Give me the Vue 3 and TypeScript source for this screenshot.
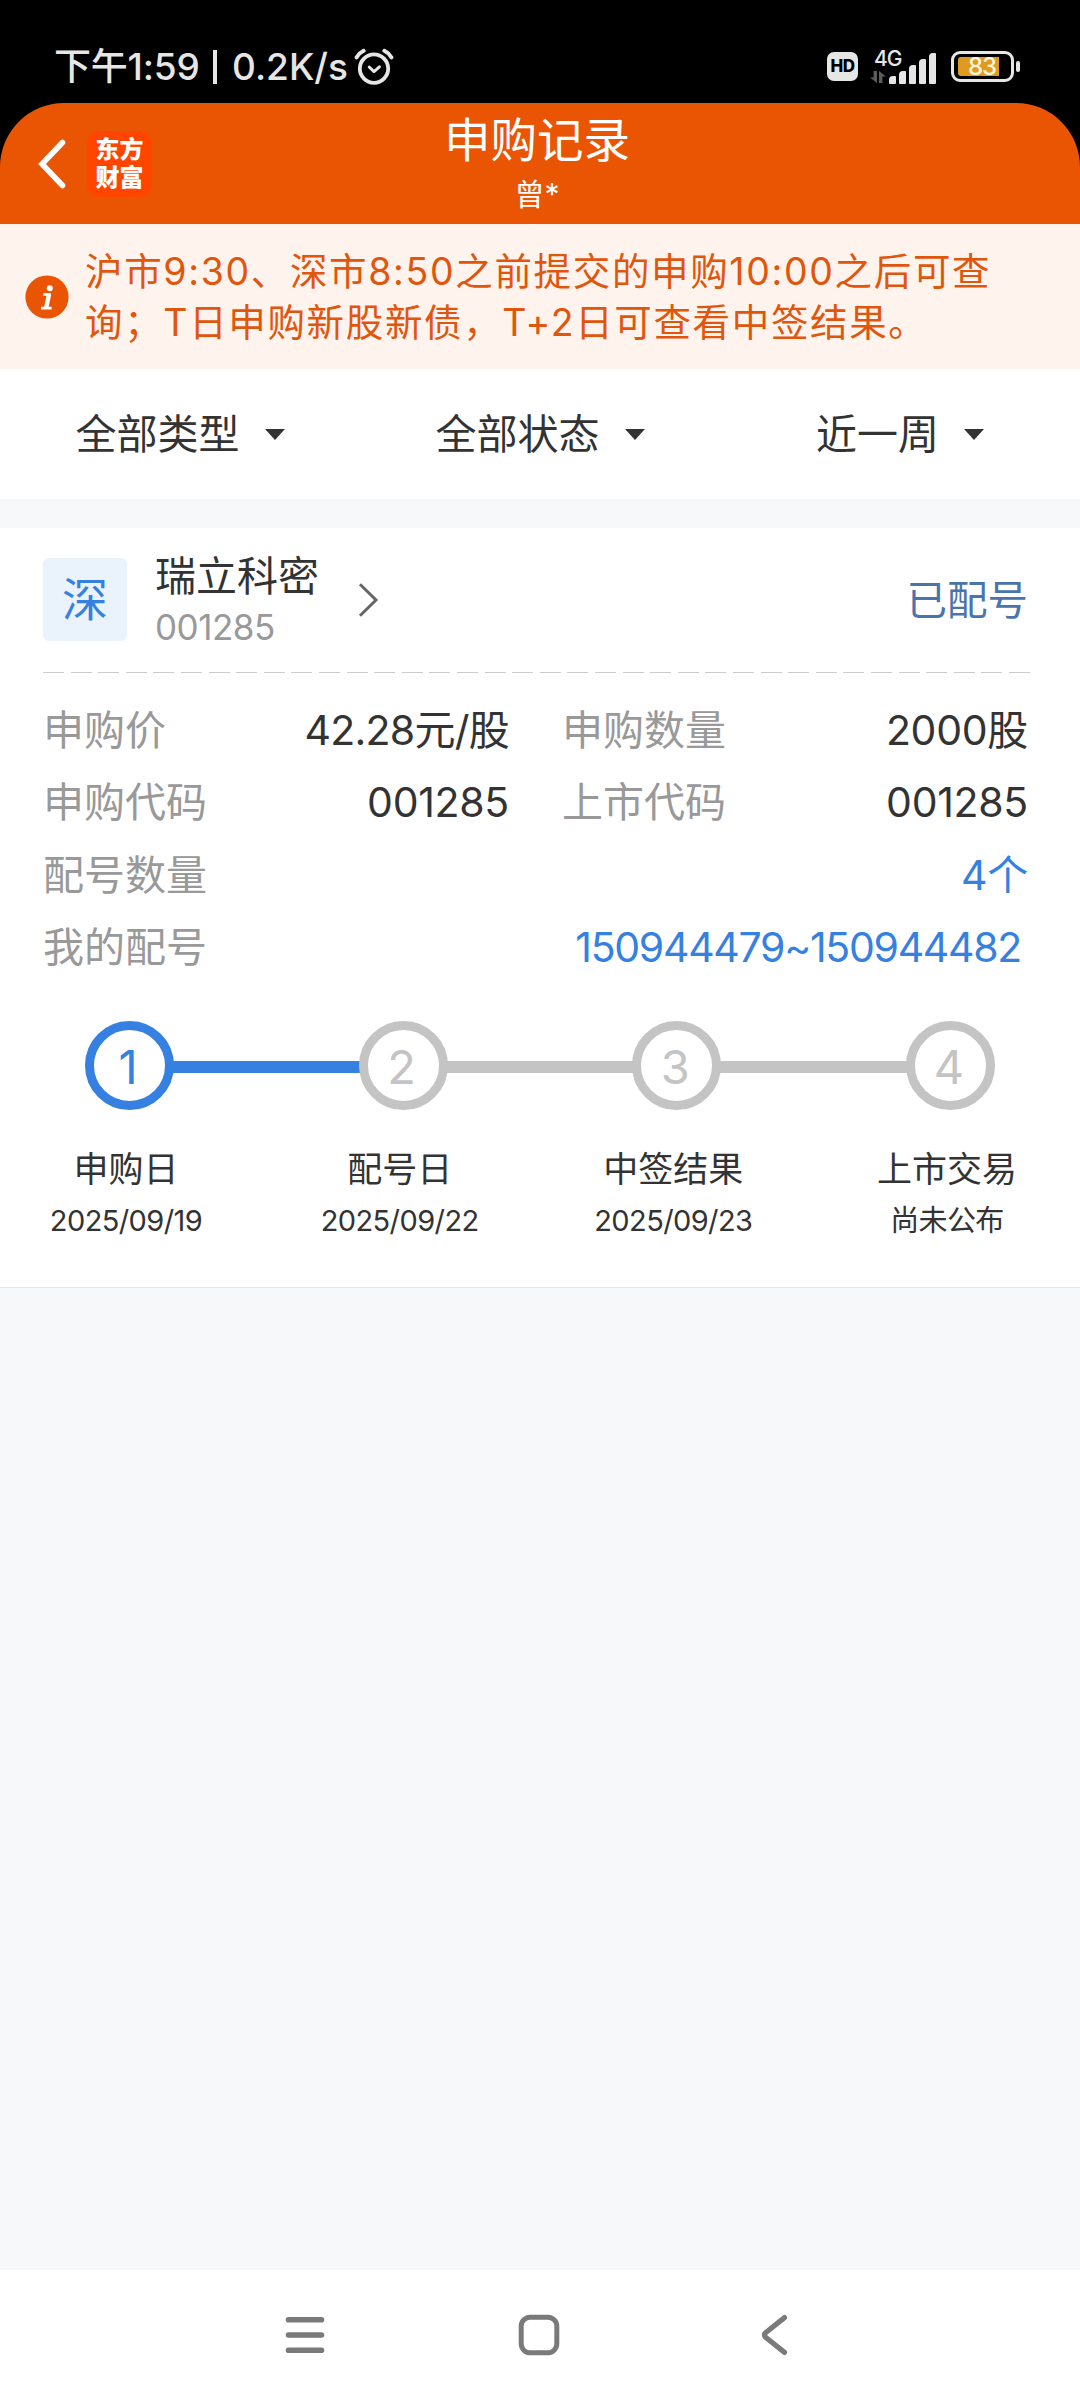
<script setup lang="ts">
interface Filter {
  label: string
}
interface Cell {
  label: string
  value: string
  kind?: string
}
interface Step {
  title: string
  date: string
  done: boolean
}

const filters: Filter[] = [{ label: '全部类型' }, { label: '全部状态' }, { label: '近一周' }]

const rows: Cell[][] = [
  [
    { label: '申购价', value: '42.28元/股', kind: 'price' },
    { label: '申购数量', value: '2000股' },
  ],
  [
    { label: '申购代码', value: '001285' },
    { label: '上市代码', value: '001285' },
  ],
  [{ label: '配号数量', value: '4个', kind: 'link' }],
  [{ label: '我的配号', value: '150944479~150944482', kind: 'link range' }],
]

const steps: Step[] = [
  { title: '申购日', date: '2025/09/19', done: true },
  { title: '配号日', date: '2025/09/22', done: false },
  { title: '中签结果', date: '2025/09/23', done: false },
  { title: '上市交易', date: '尚未公布', done: false },
]

const signalBars = [8, 13, 19, 25, 31]
</script>

<template>
  <div class="screen">
    <div class="top">
      <div class="status-bar">
        <span class="clock">下午1:59</span>
        <i class="divider"></i>
        <span class="speed">0.2K/s</span>
        <svg class="alarm" width="40" height="38" viewBox="0 0 40 38" fill="none" stroke="#e6e6e6" stroke-linecap="round" stroke-linejoin="round">
          <circle cx="20" cy="20.6" r="14.2" stroke-width="3.8" />
          <path d="M15.2 19l4.8 4.6 5.4-4.8" stroke-width="3" />
          <path d="M2.6 9.4Q5 5 9.6 2.8M37.4 9.4Q35 5 30.4 2.8" stroke-width="4" />
        </svg>
        <span class="hd">HD</span>
        <span class="network">
          <span class="gen">4G</span>
          <svg class="arrows" width="16" height="12" viewBox="0 0 16 12" fill="#5c5c5c">
            <path d="M3.6 0H7v12L0 6.600h3.600zM9 0l7 5.400h-3.600V12H9z" />
          </svg>
        </span>
        <span class="signal">
          <i v-for="h in signalBars" :key="h" class="bar" :style="{ height: h + 'px' }"></i>
        </span>
        <span class="battery"><i class="level"></i><b class="percent">83</b></span>
        <i class="battery-cap"></i>
      </div>

      <header class="header">
        <svg class="back" width="32" height="54" viewBox="0 0 32 54" fill="none" stroke="#fff" stroke-width="5.6" stroke-linecap="round" stroke-linejoin="miter">
          <path d="M26.5 5.5L6 27l20.5 21.5" />
        </svg>
        <div class="logo"><span>东方</span><span>财富</span></div>
        <div class="heading">
          <h1>申购记录</h1>
          <p>曾*</p>
        </div>
      </header>
    </div>

    <div class="notice">
      <svg class="info" width="44" height="44" viewBox="0 0 44 44">
        <circle cx="22" cy="22" r="21.6" fill="#ea5504" />
        <circle cx="24.8" cy="13.2" r="3" fill="#fff" />
        <path d="M18.4 19.4h7.400M16 33.200h10.600" fill="none" stroke="#fff" stroke-width="2.8" />
        <path d="M24 19.400L21.200 33" stroke="#fff" stroke-width="4.400" />
      </svg>
      <div class="notice-text">
        <div>沪市9:30、深市8:50之前提交的申购10:00之后可查</div>
        <div>询；T日申购新股新债，T+2日可查看中签结果。</div>
      </div>
    </div>

    <div class="filters">
      <div v-for="f in filters" :key="f.label" class="filter">
        <span class="filter-text">{{ f.label }}</span>
        <i class="caret"></i>
      </div>
    </div>

    <section class="card">
      <div class="stock">
        <div class="market">深</div>
        <div class="names">
          <div class="name">瑞立科密</div>
          <div class="code">001285</div>
        </div>
        <svg class="chevron" width="22" height="36" viewBox="0 0 22 36" fill="none" stroke="#666" stroke-width="3">
          <path d="M2 2.2L18 18 2 33.8" />
        </svg>
        <div class="state">已配号</div>
      </div>
      <div class="dashes"></div>

      <div class="rows">
        <div v-for="(row, i) in rows" :key="i" class="row">
          <div v-for="cell in row" :key="cell.label" class="cell">
            <span class="label">{{ cell.label }}</span>
            <span class="value" :class="cell.kind">{{ cell.value }}</span>
          </div>
        </div>
      </div>

      <div class="track">
        <template v-for="(s, i) in steps" :key="s.title">
          <div class="dot" :class="{ done: s.done }">{{ i + 1 }}</div>
          <div v-if="i < steps.length - 1" class="line" :class="{ done: s.done }"></div>
        </template>
      </div>
      <div class="step-labels">
        <div v-for="s in steps" :key="s.title" class="step-label">
          <div class="step-title">{{ s.title }}</div>
          <div class="step-date">{{ s.date }}</div>
        </div>
      </div>
    </section>

    <div class="empty"></div>

    <nav class="nav">
      <svg width="40" height="44" viewBox="0 0 40 44" stroke="#7a7a7a" stroke-width="5.6" stroke-linecap="round">
        <path d="M3.500 6.700h33M3.500 22h33M3.500 37.300h33" />
      </svg>
      <svg width="44" height="44" viewBox="0 0 44 44" fill="none" stroke="#7a7a7a" stroke-width="5">
        <rect x="4.200" y="4.200" width="35.600" height="35.600" rx="9" />
      </svg>
      <svg width="30" height="44" viewBox="0 0 30 44" fill="none" stroke="#7a7a7a" stroke-width="5.200" stroke-linecap="round" stroke-linejoin="round">
        <path d="M25.500 4.600L6.600 19.700Q4.200 22 6.600 24.300L25.500 39.400" />
      </svg>
    </nav>
  </div>
</template>

<style>
body {
  margin: 0;
}
</style>

<style scoped>
.screen {
  width: 1080px;
  height: 2400px;
  display: flex;
  flex-direction: column;
  overflow: hidden;
  background: #f6f8fa;
  color: #333;
  font-family: Inter, 'Noto Sans CJK SC', sans-serif;
  white-space: nowrap;
}
.top {
  background: #000;
}
.status-bar {
  height: 103px;
  display: flex;
  align-items: center;
  box-sizing: border-box;
  padding: 30px 0 0 54px;
  color: #e6e6e6;
  font-size: 37px;
  font-weight: 500;
  line-height: 72px;
}
.clock {
  width: 145px;
  letter-spacing: -0.2px;
}
.divider {
  width: 4px;
  height: 34px;
  margin-left: 14px;
  background: #e6e6e6;
}
.speed {
  width: 117px;
  margin-left: 15px;
}
.alarm {
  margin-left: 5px;
}
.hd {
  width: 31px;
  height: 29px;
  margin-left: 433px;
  border-radius: 7px;
  background: #e6e6e6;
  color: #000;
  font-size: 17px;
  font-weight: 800;
  line-height: 29px;
  letter-spacing: -0.5px;
  text-align: center;
}
.network {
  width: 31px;
  height: 34px;
  margin-left: 12px;
  display: flex;
  flex-direction: column;
}
.gen {
  height: 21px;
  padding-left: 4px;
  font-size: 21px;
  line-height: 17px;
  letter-spacing: -1px;
}
.signal {
  height: 34px;
  margin-left: -12px;
  display: flex;
  align-items: flex-end;
  gap: 3px;
}
.bar {
  width: 7px;
  background: #e6e6e6;
  border-radius: 4px 1px 1px 1px;
}
.battery {
  position: relative;
  width: 63px;
  height: 31px;
  margin-left: 15px;
  box-sizing: border-box;
  border: 3px solid #e6e6e6;
  border-radius: 9px;
  padding: 3px 4px;
}
.level {
  display: block;
  width: 41px;
  height: 19px;
  border-radius: 3px 0 0 3px;
  background: #e09a22;
}
.percent {
  position: absolute;
  left: 14px;
  top: 0;
  font-size: 24px;
  font-weight: 500;
  line-height: 25px;
  letter-spacing: -1px;
  color: #fff6dc;
}
.battery-cap {
  width: 4px;
  height: 11px;
  margin-left: 2px;
  border-radius: 2px;
  background: #e6e6e6;
}
.header {
  height: 121px;
  display: flex;
  align-items: center;
  background: #ea5504;
  border-radius: 64px 64px 0 0;
}
.back {
  margin-left: 36px;
}
.logo {
  width: 65px;
  height: 66px;
  margin-left: 19px;
  display: flex;
  flex-direction: column;
  justify-content: center;
  align-items: center;
  border-radius: 13px;
  background: #ff4500;
  color: #fff;
  font-size: 24px;
  font-weight: 900;
  line-height: 28px;
}
.heading {
  width: 300px;
  margin-left: 235px;
  text-align: center;
  color: #fff;
}
h1 {
  margin: 0;
  font-size: 46.500px;
  font-weight: 400;
  line-height: 60px;
}
p {
  margin: 0;
  font-size: 30px;
  line-height: 48px;
}
.notice {
  height: 145px;
  display: flex;
  align-items: center;
  background: #fff3ee;
}
.info {
  margin-left: 25px;
}
.notice-text {
  margin-left: 16px;
  padding-top: 1px;
  color: #e0560c;
  font-size: 37.500px;
  line-height: 51px;
  letter-spacing: 1.650px;
}
.notice-text div {
  height: 51px;
}
.filters {
  height: 130px;
  display: flex;
  align-items: center;
  background: #fff;
  font-size: 41px;
}
.filter {
  flex: 1;
  display: flex;
  align-items: center;
  justify-content: center;
  gap: 25px;
}
.filter-text {
  padding-bottom: 6px;
}
.caret {
  border: 10px solid transparent;
  border-top: 11px solid #333;
  border-bottom: 0;
}
.card {
  height: 760px;
  margin-top: 29px;
  box-sizing: border-box;
  border-bottom: 1px solid #e6e6e6;
  background: #fff;
}
.stock {
  height: 144px;
  display: flex;
  align-items: center;
  padding: 0 52px 0 43px;
}
.market {
  width: 84px;
  height: 83px;
  margin-bottom: 1px;
  border-radius: 6px;
  background: #eaf2fc;
  color: #3580e0;
  font-size: 46px;
  line-height: 83px;
  text-align: center;
}
.names {
  width: 166px;
  margin-left: 28px;
  padding-top: 4px;
}
.name {
  font-size: 41px;
  line-height: 51px;
}
.code {
  color: #999;
  font-size: 35px;
  line-height: 51px;
  letter-spacing: -0.500px;
}
.chevron {
  margin-left: 37px;
}
.state {
  margin-left: auto;
  padding-bottom: 6px;
  color: #4a74ac;
  font-size: 40.500px;
}
.dashes {
  height: 1px;
  margin: 0 50px 0 43px;
  background: repeating-linear-gradient(90deg, #ccc 0 21px, transparent 21px 27.600px);
}
.rows {
  padding: 21px 52px 0 43px;
}
.row {
  height: 72.300px;
  display: flex;
  align-items: center;
  gap: 53px;
  font-size: 41px;
  line-height: 72px;
}
.cell {
  flex: 1;
  display: flex;
  justify-content: space-between;
}
.label {
  color: #999;
}
.value {
  letter-spacing: -0.300px;
}
.price {
  letter-spacing: -0.750px;
}
.link {
  color: #3580e0;
}
.range {
  padding-right: 7px;
  letter-spacing: -1.300px;
}
.track {
  display: flex;
  align-items: center;
  margin: 38px 85px 0;
}
.dot {
  width: 89px;
  height: 89px;
  flex: none;
  box-sizing: border-box;
  border: 9px solid #c4c4c4;
  border-radius: 50%;
  padding-right: 3px;
  color: #c4c4c4;
  font-size: 47px;
  line-height: 73px;
  text-align: center;
}
.dot.done {
  border-color: #3580e0;
  color: #3580e0;
}
.line {
  flex: 1;
  height: 12px;
  margin: 2px -2px 0;
  background: #c4c4c4;
}
.line.done {
  background: #3580e0;
}
.step-labels {
  display: flex;
  justify-content: space-between;
  margin: 34px 53px 0 46px;
}
.step-label {
  width: 160px;
  text-align: center;
}
.step-title {
  font-size: 35px;
  line-height: 51px;
}
.step-date {
  font-size: 29px;
  line-height: 51px;
  letter-spacing: -0.600px;
}
.empty {
  flex: 1;
}
.nav {
  height: 130px;
  display: flex;
  align-items: center;
  padding-left: 285px;
  background: #fff;
}
.nav svg:nth-child(2) {
  margin-left: 192px;
}
.nav svg:nth-child(3) {
  margin-left: 198px;
}
</style>
